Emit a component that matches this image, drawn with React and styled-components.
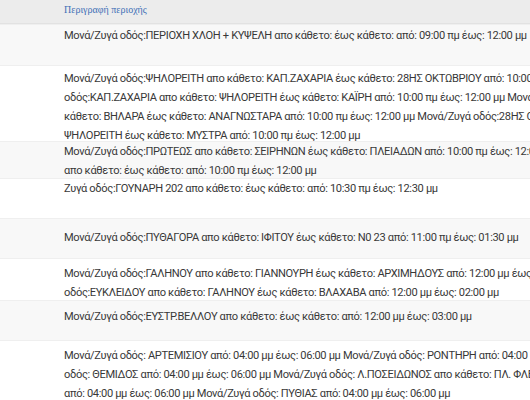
import React from "react";
import styled, { createGlobalStyle } from "styled-components";

const Global = createGlobalStyle`
  html, body { margin: 0; padding: 0; background: #ffffff; overflow: hidden; }
  body { width: 530px; height: 400px; }
`;

const Table = styled.div`
  display: flex;
  flex-direction: column;
  width: 530px;
  font-family: Roboto, "Noto Sans", sans-serif;
`;

const Header = styled.div`
  height: 24px;
  background: #ececec;
  border-bottom: 1px solid #e2e2e2;
  box-sizing: border-box;
  padding-left: 64px;
  display: flex;
  align-items: flex-start;
`;

const HeaderLabel = styled.span`
  font-family: "Liberation Serif", "DejaVu Serif", serif;
  font-size: 10px;
  line-height: 20px;
  color: #3d6fb6;
`;

const Row = styled.div`
  box-sizing: border-box;
  height: ${(p) => p.$h}px;
  padding-top: ${(p) => p.$pt}px;
  padding-left: 64px;
  background: ${(p) => (p.$shade ? "#f8f8f8" : "#ffffff")};
  border-top: 1px solid #efefef;
  overflow: hidden;
`;

const Line = styled.div`
  font-size: 11.1px;
  letter-spacing: -0.35px;
  line-height: 19px;
  color: #383838;
  white-space: nowrap;
`;

const rows = [
  {
    h: 41, pt: 1, shade: true,
    lines: ["Μονά/Ζυγά οδός:ΠΕΡΙΟΧΗ ΧΛΟΗ + ΚΥΨΕΛΗ απο κάθετο: έως κάθετο: από: 09:00 πμ έως: 12:00 μμ"],
  },
  {
    h: 76, pt: 3, shade: false,
    lines: [
      "Μονά/Ζυγά οδός:ΨΗΛΟΡΕΙΤΗ απο κάθετο: ΚΑΠ.ΖΑΧΑΡΙΑ έως κάθετο: 28ΗΣ ΟΚΤΩΒΡΙΟΥ από: 10:00 πμ έως: 12:00 μμ Μονά/Ζυγά",
      "οδός:ΚΑΠ.ΖΑΧΑΡΙΑ απο κάθετο: ΨΗΛΟΡΕΙΤΗ έως κάθετο: ΚΑΪΡΗ από: 10:00 πμ έως: 12:00 μμ Μονά/Ζυγά οδός:ΑΝΑΓΝΩΣΤΑΡΑ απο",
      "κάθετο: ΒΗΛΑΡΑ έως κάθετο: ΑΝΑΓΝΩΣΤΑΡΑ από: 10:00 πμ έως: 12:00 μμ Μονά/Ζυγά οδός:28ΗΣ ΟΚΤΩΒΡΙΟΥ απο κάθετο:",
      "ΨΗΛΟΡΕΙΤΗ έως κάθετο: ΜΥΣΤΡΑ από: 10:00 πμ έως: 12:00 μμ",
    ],
  },
  {
    h: 37, pt: 0, shade: true,
    lines: [
      "Μονά/Ζυγά οδός:ΠΡΩΤΕΩΣ απο κάθετο: ΣΕΙΡΗΝΩΝ έως κάθετο: ΠΛΕΙΑΔΩΝ από: 10:00 πμ έως: 12:00 μμ Μονά/Ζυγά οδός:ΣΕΙΡΗΝΩΝ",
      "απο κάθετο: έως κάθετο: από: 10:00 πμ έως: 12:00 μμ",
    ],
  },
  {
    h: 40, pt: 0, shade: false,
    lines: ["Ζυγά οδός:ΓΟΥΝΑΡΗ 202 απο κάθετο: έως κάθετο: από: 10:30 πμ έως: 12:30 μμ"],
  },
  {
    h: 40, pt: 9, shade: true,
    lines: ["Μονά/Ζυγά οδός:ΠΥΘΑΓΟΡΑ απο κάθετο: ΙΦΙΤΟΥ έως κάθετο: Ν0 23 από: 11:00 πμ έως: 01:30 μμ"],
  },
  {
    h: 42, pt: 5, shade: false,
    lines: [
      "Μονά/Ζυγά οδός:ΓΑΛΗΝΟΥ απο κάθετο: ΓΙΑΝΝΟΥΡΗ έως κάθετο: ΑΡΧΙΜΗΔΟΥΣ από: 12:00 μμ έως: 02:00 μμ Μονά/Ζυγά",
      "οδός:ΕΥΚΛΕΙΔΟΥ απο κάθετο: ΓΑΛΗΝΟΥ έως κάθετο: ΒΛΑΧΑΒΑ από: 12:00 μμ έως: 02:00 μμ",
    ],
  },
  {
    h: 40, pt: 6, shade: true,
    lines: ["Μονά/Ζυγά οδός:ΕΥΣΤΡ.ΒΕΛΛΟΥ απο κάθετο: έως κάθετο: από: 12:00 μμ έως: 03:00 μμ"],
  },
  {
    h: 80, pt: 5, shade: false,
    lines: [
      "Μονά/Ζυγά οδός: ΑΡΤΕΜΙΣΙΟΥ από: 04:00 μμ έως: 06:00 μμ Μονά/Ζυγά οδός: ΡΟΝΤΗΡΗ από: 04:00 μμ έως: 06:00 μμ Μονά/Ζυγά",
      "οδός: ΘΕΜΙΔΟΣ από: 04:00 μμ έως: 06:00 μμ Μονά/Ζυγά οδός: Λ.ΠΟΣΕΙΔΩΝΟΣ απο κάθετο: ΠΛ. ΦΛΕΜΙΝΓΚ",
      "από: 04:00 μμ έως: 06:00 μμ Μονά/Ζυγά οδός: ΠΥΘΙΑΣ από: 04:00 μμ έως: 06:00 μμ",
    ],
  },
];

export default function App() {
  return (
    <>
      <Global />
      <Table>
        <Header>
          <HeaderLabel>Περιγραφή περιοχής</HeaderLabel>
        </Header>
        {rows.map((r, i) => (
          <Row key={i} $h={r.h} $pt={r.pt} $shade={r.shade}>
            {r.lines.map((l, j) => (
              <Line key={j}>{l}</Line>
            ))}
          </Row>
        ))}
      </Table>
    </>
  );
}
